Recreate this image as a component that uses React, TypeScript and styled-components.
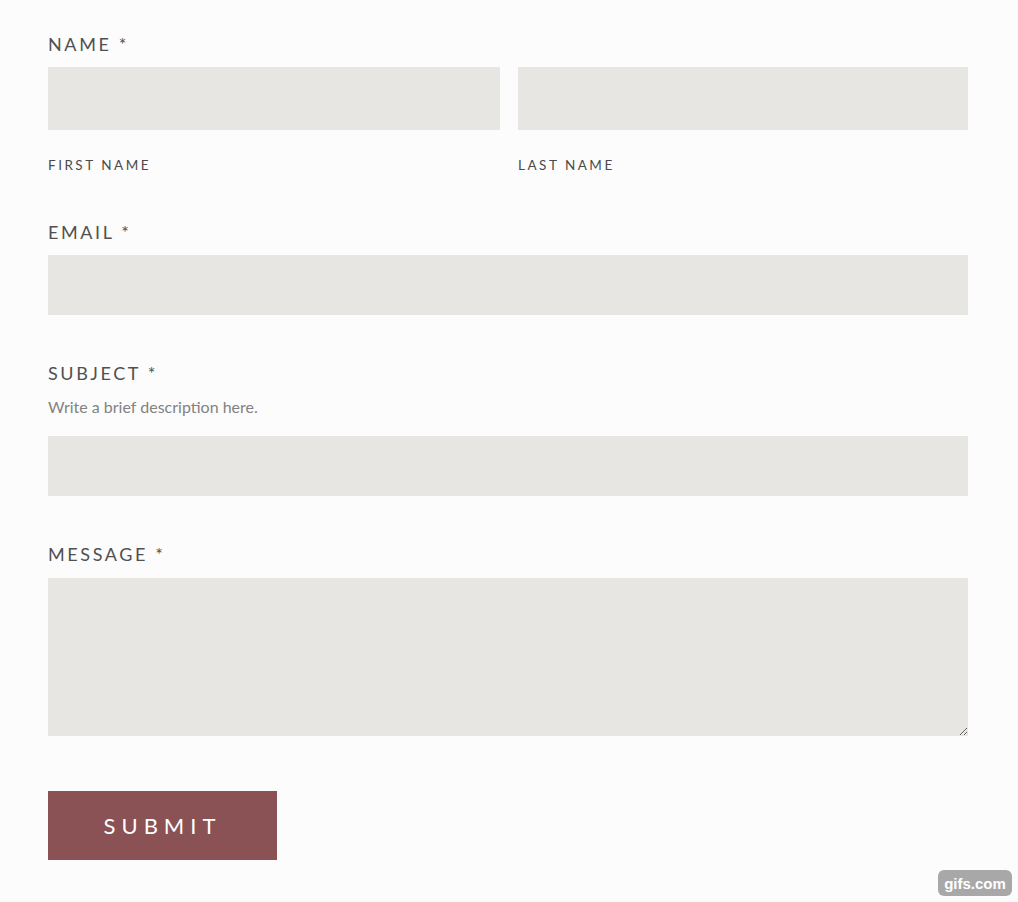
import React from "react";
import styled, { createGlobalStyle } from "styled-components";

const Global = createGlobalStyle`
  html, body { margin: 0; padding: 0; background: #fcfcfc; }
  body { font-family: "Lato", "Liberation Sans", sans-serif; }
  * { box-sizing: border-box; }
`;

const Page = styled.div`
  min-height: 902px;
  padding: 32px 50px 0 48px;
  position: relative;
`;

const Form = styled.form`
  width: 920px;
  display: flex;
  flex-direction: column;
`;

const Field = styled.div<{ $top?: number }>`
  display: flex;
  flex-direction: column;
  margin-top: ${(p) => p.$top ?? 0}px;
`;

const Label = styled.label<{ $gap?: number }>`
  font-size: 18px;
  line-height: 24px;
  letter-spacing: 2.6px;
  color: #505050;
  font-weight: 400;
  margin-bottom: ${(p) => p.$gap ?? 11}px;
`;

const Hint = styled.div`
  font-size: 16px;
  line-height: 20px;
  color: #828282;
  margin-top: 12px;
  margin-bottom: 19px;
  font-weight: 400;
`;

const Row = styled.div`
  display: grid;
  grid-template-columns: 452px 450px;
  column-gap: 18px;
`;

const Col = styled.div`
  display: flex;
  flex-direction: column;
`;

const Input = styled.input<{ $h: number }>`
  height: ${(p) => p.$h}px;
  width: 100%;
  border: none;
  background: #e8e6e3;
  outline: none;
  padding: 0 12px;
  font-family: inherit;
`;

const TextArea = styled.textarea`
  height: 158px;
  width: 100%;
  border: none;
  background: #e8e6e3;
  outline: none;
  resize: vertical;
  display: block;
  font-family: inherit;
`;

const SubLabel = styled.span`
  margin-top: 26px;
  font-size: 13.5px;
  line-height: 18px;
  letter-spacing: 2.5px;
  color: #4a4a4a;
`;

const Submit = styled.button`
  margin-top: 55px;
  width: 229px;
  height: 69px;
  background: #8a5254;
  border: none;
  color: #ffffff;
  font-family: "Lato", sans-serif;
  font-size: 22px;
  letter-spacing: 6px;
  padding-left: 6px;
  cursor: pointer;
`;

const Watermark = styled.div`
  position: absolute;
  right: 6px;
  bottom: 6px;
  width: 74px;
  height: 26px;
  border-radius: 6px;
  background: #a8a8a8;
  color: #ffffff;
  font-family: "Liberation Sans", Arial, sans-serif;
  font-weight: 700;
  font-size: 15px;
  display: flex;
  align-items: center;
  justify-content: center;
`;

export default function App() {
  return (
    <Page>
      <Global />
      <Form onSubmit={(e) => e.preventDefault()}>
        <Field>
          <Label>NAME *</Label>
          <Row>
            <Col>
              <Input $h={63} />
              <SubLabel>FIRST NAME</SubLabel>
            </Col>
            <Col>
              <Input $h={63} />
              <SubLabel>LAST NAME</SubLabel>
            </Col>
          </Row>
        </Field>
        <Field $top={46}>
          <Label>EMAIL *</Label>
          <Input $h={60} />
        </Field>
        <Field $top={46}>
          <Label $gap={0}>SUBJECT *</Label>
          <Hint>Write a brief description here.</Hint>
          <Input $h={60} />
        </Field>
        <Field $top={46}>
          <Label $gap={12}>MESSAGE *</Label>
          <TextArea />
        </Field>
        <div>
          <Submit type="submit">SUBMIT</Submit>
        </div>
      </Form>
      <Watermark>gifs.com</Watermark>
    </Page>
  );
}
